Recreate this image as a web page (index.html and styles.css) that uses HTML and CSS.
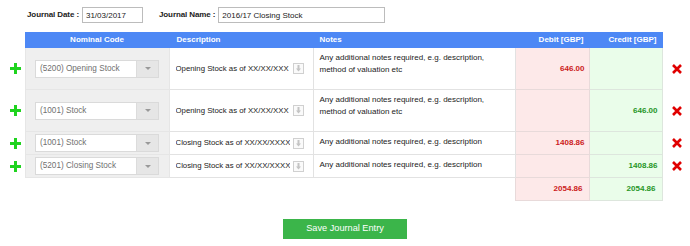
FILE: index.html
```html
<!DOCTYPE html>
<html lang="en">

<head>
  <meta charset="utf-8">
  <link rel="stylesheet" href="styles.css">
</head>

<body>
  <div class="journal">
    <div class="journal-head">
      <label class="field-label">Journal Date :</label>
      <input class="field-input date" type="text" value="31/03/2017">
      <label class="field-label name-label">Journal Name :</label>
      <input class="field-input name" type="text" value="2016/17 Closing Stock">
    </div>

    <table class="lines">
      <colgroup>
        <col class="c-add">
        <col class="c-code">
        <col class="c-desc">
        <col class="c-notes">
        <col class="c-debit">
        <col class="c-credit">
        <col class="c-del">
      </colgroup>
      <thead>
        <tr>
          <th class="blank"></th>
          <th class="h-code">Nominal Code</th>
          <th class="h-left">Description</th>
          <th class="h-left h-notes">Notes</th>
          <th class="h-right">Debit [GBP]</th>
          <th class="h-right">Credit [GBP]</th>
          <th class="blank"></th>
        </tr>
      </thead>
      <tbody>
        <tr class="tall">
          <td class="add"><svg width="11" height="11" viewBox="0 0 11 11"><path d="M4 0h3v4h4v3H7v4H4V7H0V4h4z" fill="#1fd31f"/></svg></td>
          <td class="code">
            <div class="select"><span class="select-text">(5200) Opening Stock</span><span class="select-arrow"><i></i></span></div>
          </td>
          <td class="desc">
            <div class="desc-box"><input class="desc-input" type="text" value="Opening Stock as of XX/XX/XXX"><span class="pick"><svg width="9" height="9" viewBox="0 0 9 9"><path d="M3.5 1h2v3.5H7L4.5 7.5 2 4.5h1.5z" fill="#c4c4c4"/></svg></span></div>
          </td>
          <td class="notes">Any additional notes required, e.g. description, method of valuation etc</td>
          <td class="debit">646.00</td>
          <td class="credit"></td>
          <td class="del"><svg width="10" height="10" viewBox="0 0 10 10"><path d="M1 1l8 8M9 1l-8 8" stroke="#e00000" stroke-width="2.6"/></svg></td>
        </tr>
        <tr class="tall">
          <td class="add"><svg width="11" height="11" viewBox="0 0 11 11"><path d="M4 0h3v4h4v3H7v4H4V7H0V4h4z" fill="#1fd31f"/></svg></td>
          <td class="code">
            <div class="select"><span class="select-text">(1001) Stock</span><span class="select-arrow"><i></i></span></div>
          </td>
          <td class="desc">
            <div class="desc-box"><input class="desc-input" type="text" value="Opening Stock as of XX/XX/XXX"><span class="pick"><svg width="9" height="9" viewBox="0 0 9 9"><path d="M3.5 1h2v3.5H7L4.5 7.5 2 4.5h1.5z" fill="#c4c4c4"/></svg></span></div>
          </td>
          <td class="notes">Any additional notes required, e.g. description, method of valuation etc</td>
          <td class="debit"></td>
          <td class="credit">646.00</td>
          <td class="del"><svg width="10" height="10" viewBox="0 0 10 10"><path d="M1 1l8 8M9 1l-8 8" stroke="#e00000" stroke-width="2.6"/></svg></td>
        </tr>
        <tr>
          <td class="add"><svg width="11" height="11" viewBox="0 0 11 11"><path d="M4 0h3v4h4v3H7v4H4V7H0V4h4z" fill="#1fd31f"/></svg></td>
          <td class="code">
            <div class="select"><span class="select-text">(1001) Stock</span><span class="select-arrow"><i></i></span></div>
          </td>
          <td class="desc">
            <div class="desc-box"><input class="desc-input" type="text" value="Closing Stock as of XX/XX/XXXX"><span class="pick"><svg width="9" height="9" viewBox="0 0 9 9"><path d="M3.5 1h2v3.5H7L4.5 7.5 2 4.5h1.5z" fill="#c4c4c4"/></svg></span></div>
          </td>
          <td class="notes">Any additional notes required, e.g. description</td>
          <td class="debit">1408.86</td>
          <td class="credit"></td>
          <td class="del"><svg width="10" height="10" viewBox="0 0 10 10"><path d="M1 1l8 8M9 1l-8 8" stroke="#e00000" stroke-width="2.6"/></svg></td>
        </tr>
        <tr>
          <td class="add"><svg width="11" height="11" viewBox="0 0 11 11"><path d="M4 0h3v4h4v3H7v4H4V7H0V4h4z" fill="#1fd31f"/></svg></td>
          <td class="code">
            <div class="select"><span class="select-text">(5201) Closing Stock</span><span class="select-arrow"><i></i></span></div>
          </td>
          <td class="desc">
            <div class="desc-box"><input class="desc-input" type="text" value="Closing Stock as of XX/XX/XXXX"><span class="pick"><svg width="9" height="9" viewBox="0 0 9 9"><path d="M3.5 1h2v3.5H7L4.5 7.5 2 4.5h1.5z" fill="#c4c4c4"/></svg></span></div>
          </td>
          <td class="notes">Any additional notes required, e.g. description</td>
          <td class="debit"></td>
          <td class="credit">1408.86</td>
          <td class="del"><svg width="10" height="10" viewBox="0 0 10 10"><path d="M1 1l8 8M9 1l-8 8" stroke="#e00000" stroke-width="2.6"/></svg></td>
        </tr>
        <tr class="totals">
          <td class="blank" colspan="4"></td>
          <td class="debit total">2054.86</td>
          <td class="credit total">2054.86</td>
          <td class="blank"></td>
        </tr>
      </tbody>
    </table>

    <button class="save" type="button">Save Journal Entry</button>
  </div>
</body>

</html>
```

FILE: styles.css
```css
* {
  box-sizing: border-box;
}

body,
input,
button,
table {
  margin: 0;
  font: 8px/1.2 "Liberation Sans", Arial, sans-serif;
  color: #222;
}

input {
  outline: none;
}

.journal {
  width: 690px;
}

/* header fields */

.journal-head {
  display: flex;
  align-items: center;
  padding: 7px 0 0 27px;
}

.field-label {
  font-weight: bold;
  margin-right: 3px;
  letter-spacing: -0.1px;
}

.name-label {
  margin-left: 16px;
}

.field-input {
  height: 16px;
  padding: 0 3px;
  border: 1px solid #bcbcbc;
  background: #fff;
}

.date {
  width: 61px;
}

.name {
  width: 167px;
}

/* lines table */

.lines {
  table-layout: fixed;
  width: 690px;
  margin-top: 9px;
  border-collapse: collapse;
}

.c-add { width: 25px; }
.c-code { width: 144px; }
.c-desc { width: 144px; }
.c-notes { width: 202px; }
.c-debit { width: 74px; }
.c-credit { width: 73px; }
.c-del { width: 28px; }

.lines th {
  height: 15px;
  padding: 0 5px;
  background: #4d88f5;
  color: #fff;
  font-weight: bold;
  border: 1px solid #4d88f5;
}

.lines th.blank {
  background: none;
  border: none;
}

.h-code {
  text-align: center;
}

.h-left {
  text-align: left;
  padding-left: 7px !important;
}

.h-notes {
  padding-left: 6px !important;
}

.h-right {
  text-align: right;
}

.lines td {
  padding: 2px 4px;
  vertical-align: middle;
  border: 1px solid #e2e2e2;
}

.lines td.add,
.lines td.del,
.lines td.blank {
  border: none;
  background: none;
}

.lines td.add {
  text-align: right;
  padding: 0 4px 0 0;
  line-height: 0;
}

.lines td.del {
  padding: 0 0 0 9px;
  line-height: 0;
}

.tall td {
  height: 42px;
}

.lines td.code {
  background: #efefef;
  border-color: #e6e6e6;
}

.select {
  display: flex;
  width: 124px;
  height: 18px;
  margin: 0 auto;
  border: 1px solid #dadada;
  background: #fff;
}

.select-text {
  flex: 1;
  padding-left: 4px;
  font-size: 8.2px;
  line-height: 16px;
  color: #707070;
  white-space: nowrap;
  overflow: hidden;
}

.select-arrow {
  display: flex;
  align-items: center;
  justify-content: center;
  width: 22px;
  background: #e6e6e6;
  border-left: 1px solid #dcdcdc;
}

.select-arrow i {
  border-top: 3px solid #999;
  border-left: 3px solid transparent;
  border-right: 3px solid transparent;
}

.lines td.desc {
  padding-left: 6px;
}

.desc-box {
  display: flex;
  align-items: center;
}

.desc-input {
  width: 114px;
  padding: 0;
  border: none;
  background: none;
  color: #222;
  font-size: 7.8px;
}

.pick {
  display: flex;
  align-items: center;
  justify-content: center;
  width: 11px;
  height: 11px;
  margin-left: 3px;
  border: 1px solid #d0d0d0;
  background: #fafafa;
}

.lines td.notes {
  vertical-align: top;
  padding: 4px 6px;
  line-height: 12px;
}

.lines td.debit,
.lines td.credit {
  text-align: right;
  font-weight: bold;
}

.lines td.debit {
  background: #fde9e9;
  color: #cc2020;
  border-color: #e8dada;
}

.lines td.credit {
  background: #eafdea;
  color: #269626;
  border-color: #dde6dd;
}

.totals td {
  height: 23px;
}

.lines td.total {
  padding-right: 6px;
}

/* save */

.save {
  display: block;
  width: 124px;
  height: 20px;
  margin: 18px auto 0;
  padding: 0;
  border: none;
  background: #3bb54a;
  color: #fff;
  font-size: 9.2px;
  cursor: pointer;
}
```
